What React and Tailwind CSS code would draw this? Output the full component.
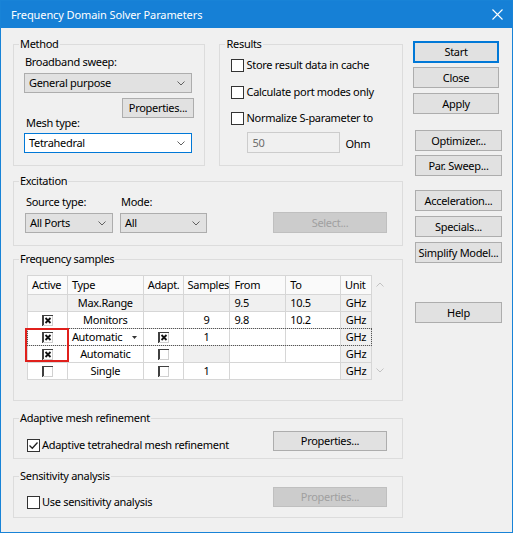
import React from 'react';

const Chevron = ({ color = '#606060' }) => (
    <svg width="8" height="5" viewBox="0 0 8 5" className="shrink-0">
        <path d="M0.5 0.5 L4 4 L7.5 0.5" fill="none" stroke={color} strokeWidth="1" />
    </svg>
);

function Select({ value, width, focused }) {
    return (
        <div className={`${width} h-[20px] flex items-center justify-between pl-[4px] pr-[6px] border ${focused ? 'bg-white border-[#0078d7]' : 'bg-[#e1e1e1] border-[#adadad]'}`}>
            <span>{value}</span>
            <Chevron />
        </div>
    );
}

function Button({ children, className = '', disabled, primary }) {
    return (
        <div className={`flex items-center justify-center whitespace-nowrap ${disabled ? 'bg-[#cccccc] border border-[#bfbfbf] text-[#a0a0a0]' : primary ? 'bg-[#e1e1e1] border-2 border-[#0078d7]' : 'bg-[#e1e1e1] border border-[#adadad]'} ${className}`}>
            {children}
        </div>
    );
}

function CheckBox({ checked }) {
    return (
        <span className="w-[13px] h-[13px] border border-[#333333] bg-white flex items-center justify-center shrink-0">
            {checked && (
                <svg width="11" height="11" viewBox="0 0 11 11">
                    <path d="M1.5 5.5 L4.3 8.3 L9.5 2.5" fill="none" stroke="#222" strokeWidth="1.3" />
                </svg>
            )}
        </span>
    );
}

// classic flat checkbox used inside the grid
function GridCheck({ checked }) {
    return (
        <svg width="11" height="11" viewBox="0 0 11 11">
            <rect x="0" y="0" width="11" height="11" fill="white" />
            <path d="M1 0 V11" stroke="#404040" strokeWidth="2" />
            <path d="M0 0.5 H11" stroke="#404040" strokeWidth="1" />
            <path d="M10.5 1 V11 M1 10.5 H11" stroke="#d0d0d0" strokeWidth="1" />
            {checked && <path d="M3.5 3 L8.5 8 M8.5 3 L3.5 8" stroke="#111" strokeWidth="1.8" />}
        </svg>
    );
}

function Group({ title, className = '', children }) {
    return (
        <fieldset className={`border border-[#dcdcdc] ${className}`}>
            <legend className="ml-[5px] px-[1px] leading-[16px]">{title}</legend>
            {children}
        </fieldset>
    );
}

const cell = 'h-full flex items-center border-r border-b border-[#d6d6d6]';
const widths = ['w-[40px]', 'w-[76px]', 'w-[40px]', 'w-[47px]', 'w-[56px]', 'w-[55px]', 'w-[31px]'];

function SamplesTable() {
    const header = ['Active', 'Type', 'Adapt.', 'Samples', 'From', 'To', 'Unit'];
    return (
        <div className="relative flex w-[361px]">
            <div className="w-[345px] border-l border-t border-[#d6d6d6]">
                <div className="flex h-[19px] bg-[#fafafa]">
                    {header.map((h, i) => (
                        <div key={h} className={`${cell} ${widths[i]} pl-[4px]`}>{h}</div>
                    ))}
                </div>
                <div className="flex h-[17px] bg-[#f0f0f0]">
                    <div className={`${cell} w-[40px]`} />
                    <div className={`${cell} w-[76px] justify-center`}>Max.Range</div>
                    <div className={`${cell} w-[40px]`} />
                    <div className={`${cell} w-[47px]`} />
                    <div className={`${cell} w-[56px] pl-[4px]`}>9.5</div>
                    <div className={`${cell} w-[55px] pl-[4px]`}>10.5</div>
                    <div className={`${cell} w-[31px] justify-center`}>GHz</div>
                </div>
                <div className="flex h-[17px] bg-white">
                    <div className={`${cell} w-[40px] justify-center`}><GridCheck checked /></div>
                    <div className={`${cell} w-[76px] justify-center`}>Monitors</div>
                    <div className={`${cell} w-[40px]`} />
                    <div className={`${cell} w-[47px] justify-center`}>9</div>
                    <div className={`${cell} w-[56px] pl-[4px]`}>9.8</div>
                    <div className={`${cell} w-[55px] pl-[4px]`}>10.2</div>
                    <div className={`${cell} w-[31px] justify-center bg-[#f0f0f0]`}>GHz</div>
                </div>
                <div className="relative flex h-[17px] bg-white">
                    <div className={`${cell} w-[40px] justify-center`}><GridCheck checked /></div>
                    <div className={`${cell} w-[76px] justify-between pl-[4px] pr-[6px]`}>
                        <span>Automatic</span>
                        <svg width="5" height="3" viewBox="0 0 5 3"><path d="M0 0 H5 L2.5 3 Z" fill="#333" /></svg>
                    </div>
                    <div className={`${cell} w-[40px] justify-center`}><GridCheck checked /></div>
                    <div className={`${cell} w-[47px] justify-center`}>1</div>
                    <div className={`${cell} w-[56px]`} />
                    <div className={`${cell} w-[55px]`} />
                    <div className={`${cell} w-[31px] justify-center bg-[#f0f0f0]`}>GHz</div>
                    <div className="absolute left-[-1px] top-[-1px] right-0 bottom-0 border border-dotted border-[#555555] pointer-events-none" />
                </div>
                <div className="flex h-[17px] bg-white">
                    <div className={`${cell} w-[40px] justify-center`}><GridCheck checked /></div>
                    <div className={`${cell} w-[76px] justify-center`}>Automatic</div>
                    <div className={`${cell} w-[40px] justify-center`}><GridCheck /></div>
                    <div className={`${cell} w-[47px] bg-[#f0f0f0]`} />
                    <div className={`${cell} w-[56px]`} />
                    <div className={`${cell} w-[55px]`} />
                    <div className={`${cell} w-[31px] justify-center bg-[#f0f0f0]`}>GHz</div>
                </div>
                <div className="flex h-[17px] bg-white">
                    <div className={`${cell} w-[40px] justify-center`}><GridCheck /></div>
                    <div className={`${cell} w-[76px] justify-center`}>Single</div>
                    <div className={`${cell} w-[40px] justify-center`}><GridCheck /></div>
                    <div className={`${cell} w-[47px] justify-center`}>1</div>
                    <div className={`${cell} w-[111px]`} />
                    <div className={`${cell} w-[31px] justify-center bg-[#f0f0f0]`}>GHz</div>
                </div>
            </div>
            <div className="w-[16px] flex flex-col items-center justify-between py-[7px] bg-[#f0f0f0]">
                <svg width="8" height="5" viewBox="0 0 8 5"><path d="M0.5 4.5 L4 1 L7.5 4.5" fill="none" stroke="#c2c2c2" /></svg>
                <svg width="8" height="5" viewBox="0 0 8 5"><path d="M0.5 0.5 L4 4 L7.5 0.5" fill="none" stroke="#c2c2c2" /></svg>
            </div>
            {/* highlight box drawn over the Active cells */}
            <div className="absolute left-[-2px] top-[53px] w-[44px] h-[34px] border-2 border-[#e0201c] pointer-events-none" />
        </div>
    );
}

export default function App() {
    return (
        <div className="w-[513px] h-[533px] overflow-hidden bg-[#f0f0f0] border border-[#1883d7] text-[11px] tracking-[-0.3px] leading-[16px] text-black font-['Noto_Sans',sans-serif]">
            <div className="h-[27px] bg-[#1680d6] flex items-center justify-between pl-[10px] pr-[9px] text-white text-[11px] tracking-[-0.1px]">
                <span>Frequency Domain Solver Parameters</span>
                <svg width="11" height="11" viewBox="0 0 11 11"><path d="M0.5 0.5 L10.5 10.5 M10.5 0.5 L0.5 10.5" stroke="white" strokeWidth="1.1" /></svg>
            </div>

            <div className="flex pl-[12px] gap-[10px]">
                <div className="w-[390px] flex flex-col pt-[8px]">
                    <div className="flex gap-[14px]">
                        <Group title="Method" className="w-[193px]">
                            <div className="pl-[10px] pb-[12px] flex flex-col">
                                <div className="mt-[2px] ml-[1px]">Broadband sweep:</div>
                                <div className="mt-[3px]"><Select value="General purpose" width="w-[168px]" /></div>
                                <Button className="ml-[98px] mt-[5px] w-[72px] h-[20px]">Properties...</Button>
                                <div className="mt-[-3px] ml-[2px]">Mesh type:</div>
                                <div className="mt-[2px]"><Select value="Tetrahedral" width="w-[168px]" focused /></div>
                            </div>
                        </Group>
                        <Group title="Results" className="w-[184px]">
                            <div className="pl-[11px] flex flex-col">
                                <label className="flex items-center gap-[2px] mt-[5px]"><CheckBox /><span>Store result data in cache</span></label>
                                <label className="flex items-center gap-[2px] mt-[11px]"><CheckBox /><span>Calculate port modes only</span></label>
                                <label className="flex items-center gap-[2px] mt-[10px]"><CheckBox /><span>Normalize S-parameter to</span></label>
                                <div className="flex items-center mt-[6px] ml-[16px]">
                                    <div className="w-[93px] h-[21px] bg-[#f0f0f0] border border-[#cccccc] text-[#6d6d6d] pl-[4px] flex items-center">50</div>
                                    <span className="ml-[5px] pt-[3px]">Ohm</span>
                                </div>
                            </div>
                        </Group>
                    </div>

                    <Group title="Excitation" className="mt-[7px]">
                        <div className="pl-[11px] pr-[15px] pb-[12px] flex items-end">
                            <div className="flex flex-col">
                                <div className="mt-[5px] ml-[1px]">Source type:</div>
                                <div className="mt-[3px]"><Select value="All Ports" width="w-[88px]" /></div>
                            </div>
                            <div className="flex flex-col ml-[7px]">
                                <div className="mt-[5px] ml-[1px]">Mode:</div>
                                <div className="mt-[3px]"><Select value="All" width="w-[87px]" /></div>
                            </div>
                            <Button disabled className="ml-auto w-[114px] h-[21px]">Select...</Button>
                        </div>
                    </Group>

                    <Group title="Frequency samples" className="mt-[5px]">
                        <div className="pl-[13px] pt-[8px] pb-[20px]">
                            <SamplesTable />
                        </div>
                    </Group>

                    <Group title="Adaptive mesh refinement" className="mt-[9px]">
                        <div className="pl-[13px] pr-[15px] pb-[5px] flex items-start">
                            <label className="flex items-center gap-[2px] mt-[11px]"><CheckBox checked /><span>Adaptive tetrahedral mesh refinement</span></label>
                            <Button className="ml-auto mt-[5px] w-[114px] h-[20px]">Properties...</Button>
                        </div>
                    </Group>

                    <Group title="Sensitivity analysis" className="mt-[9px]">
                        <div className="pl-[13px] pr-[15px] pb-[7px] flex items-start">
                            <label className="flex items-center gap-[2px] mt-[10px]"><CheckBox /><span>Use sensitivity analysis</span></label>
                            <Button disabled className="ml-auto mt-[3px] w-[114px] h-[20px]">Properties...</Button>
                        </div>
                    </Group>
                </div>

                <div className="flex flex-col pt-[13px]">
                    <Button primary className="w-[86px] h-[22px]">Start</Button>
                    <Button className="w-[86px] h-[21px] mt-[4px]">Close</Button>
                    <Button className="w-[86px] h-[21px] mt-[5px]">Apply</Button>
                    <Button className="w-[87px] h-[21px] mt-[16px] ml-[2px]">Optimizer...</Button>
                    <Button className="w-[87px] h-[21px] mt-[4px] ml-[2px]">Par. Sweep...</Button>
                    <Button className="w-[87px] h-[21px] mt-[14px] ml-[2px]">Acceleration...</Button>
                    <Button className="w-[87px] h-[21px] mt-[5px] ml-[2px]">Specials...</Button>
                    <Button className="w-[87px] h-[21px] mt-[5px] ml-[2px]">Simplify Model...</Button>
                    <Button className="w-[87px] h-[21px] mt-[39px] ml-[2px]">Help</Button>
                </div>
            </div>
        </div>
    );
}
